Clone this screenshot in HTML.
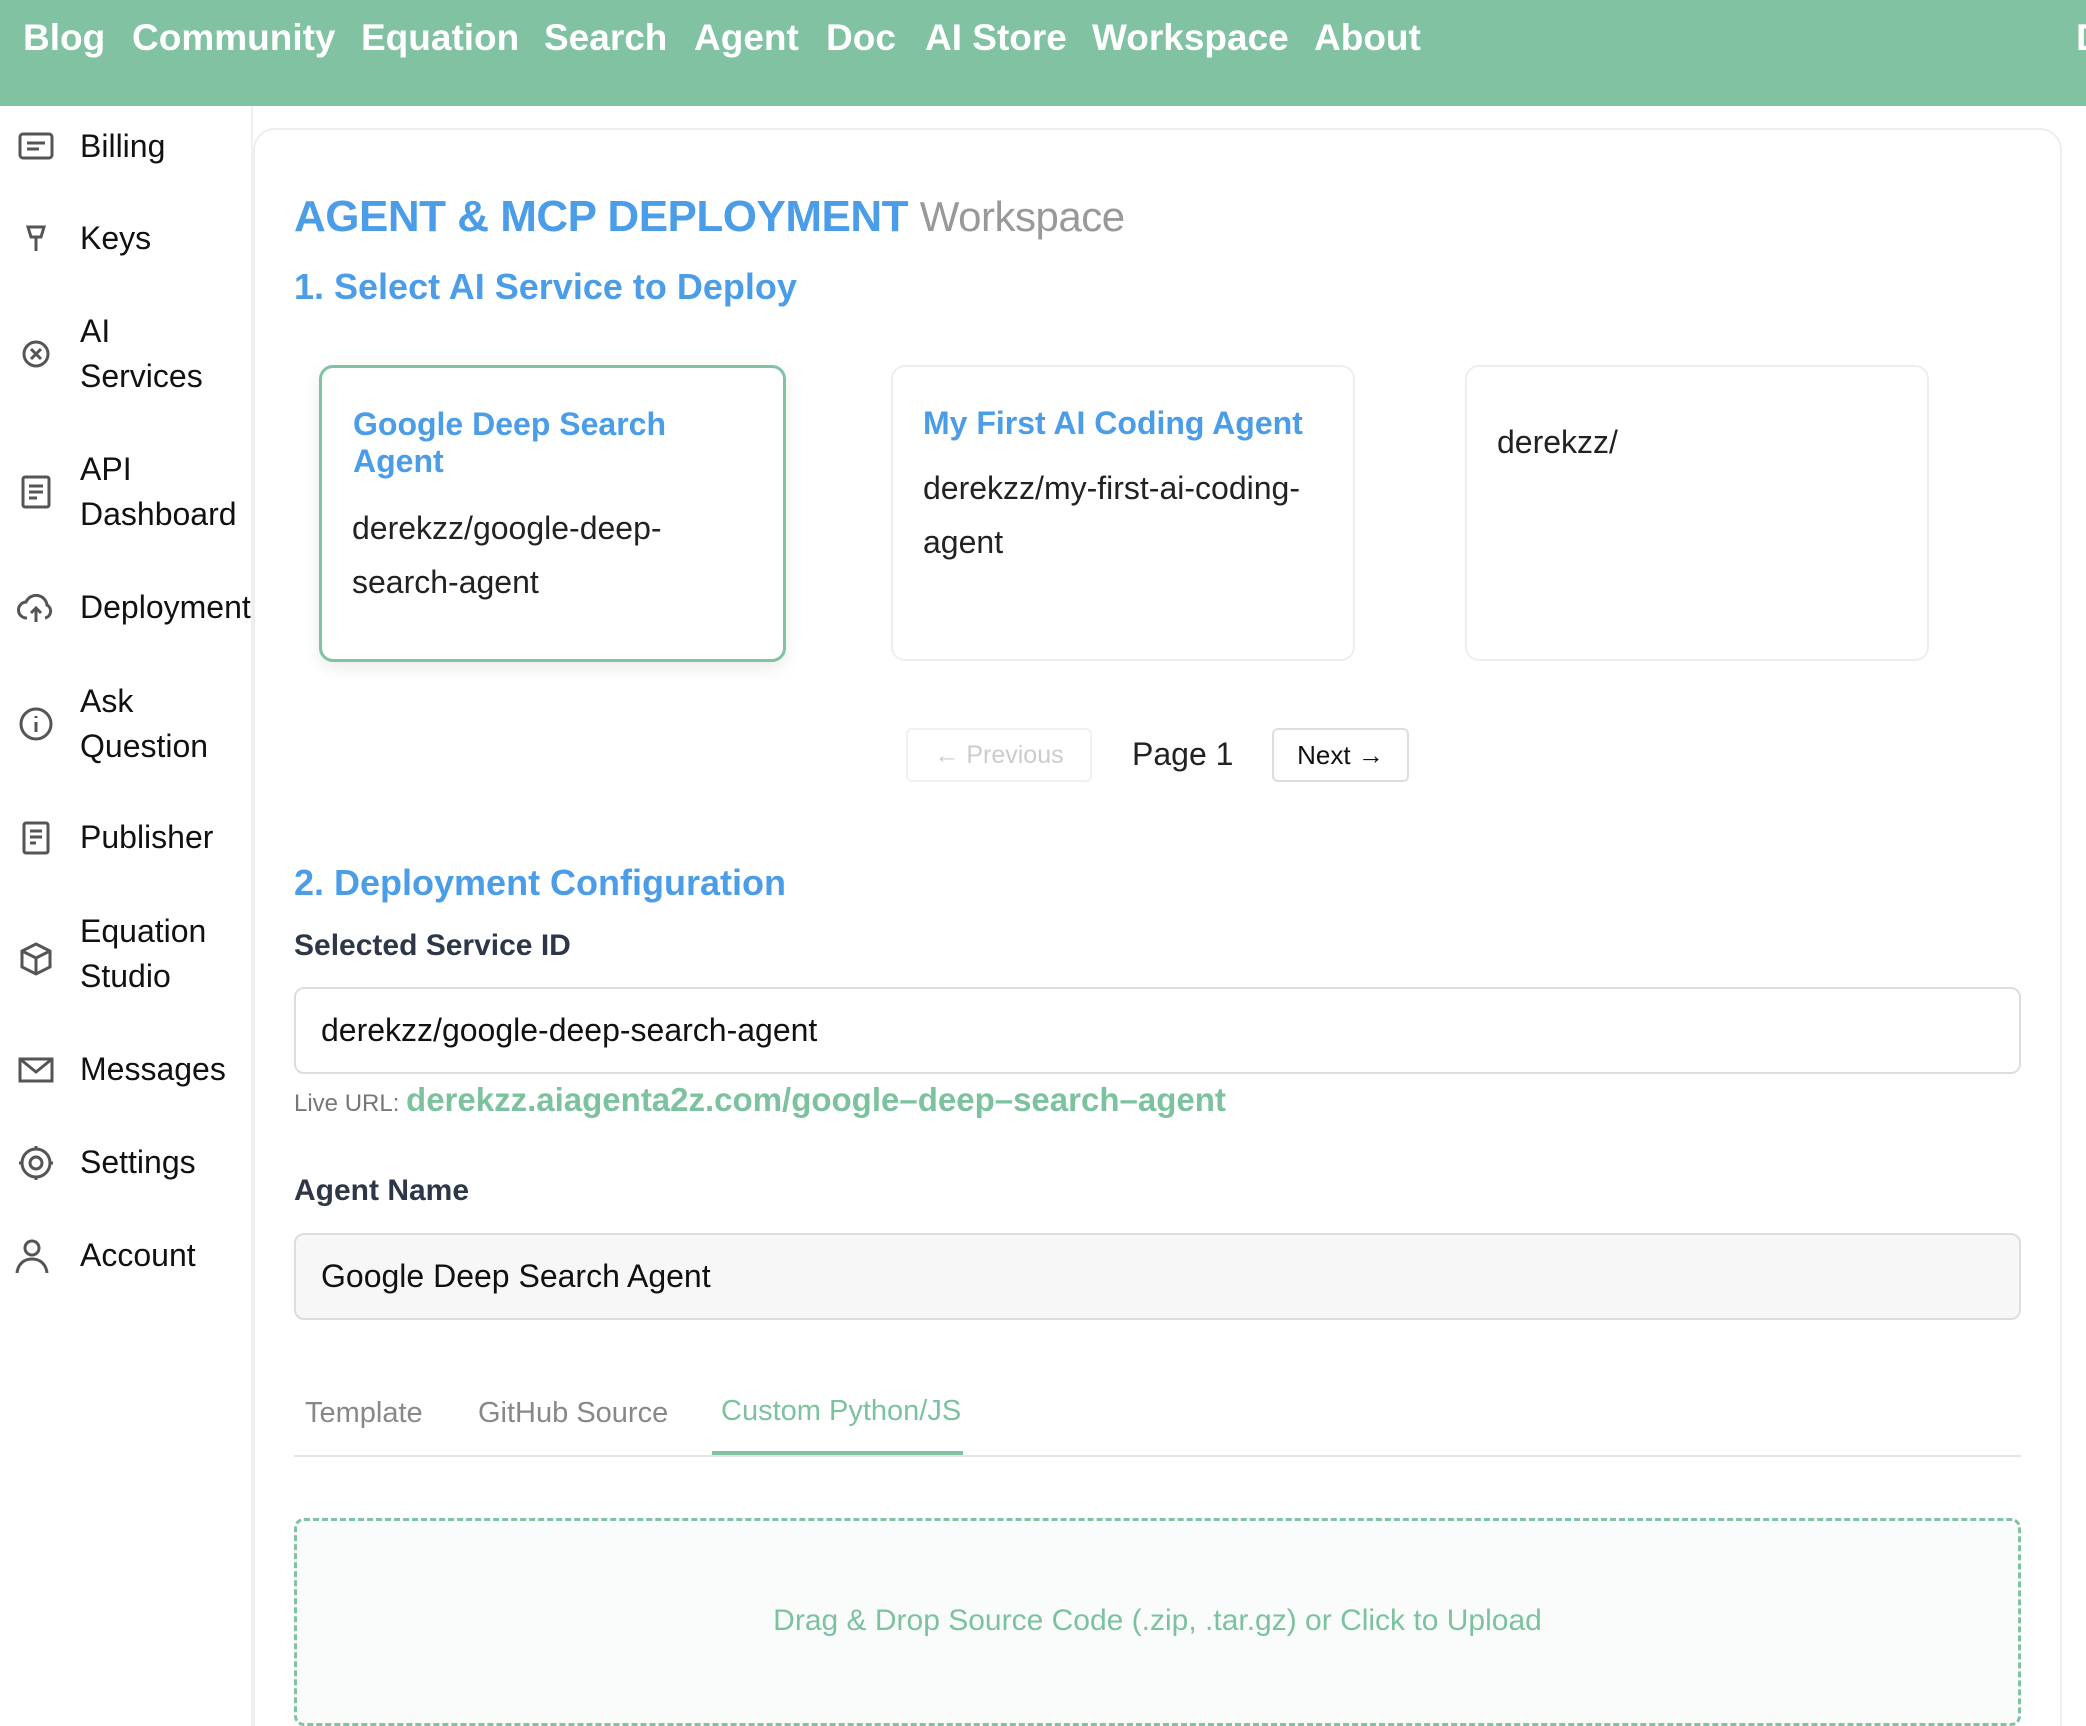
<!DOCTYPE html>
<html style="width:2086px;height:1726px;overflow:hidden"><head><meta charset="utf-8">
<style>
*{box-sizing:border-box;margin:0;padding:0}
body{width:2086px;height:1726px;overflow:hidden;background:#fff;font-family:"Liberation Sans",Arial,sans-serif;position:relative;color:#111}
.hdr{position:absolute;left:0;top:0;width:2086px;height:106px;background:#80c2a2}
.nav{position:absolute;top:16px;color:#fff;font-weight:bold;font-size:37px;line-height:44px}
.side{position:absolute;left:0;top:106px;width:253px;height:1620px;border-right:2px solid #f0f0f0}
.si{position:absolute;left:80px;font-size:32px;line-height:45px;color:#111}
.ic{position:absolute;left:16px;width:40px;height:40px}
.panel{position:absolute;left:253px;top:128px;width:1809px;height:1640px;border:2px solid #eee;border-radius:22px;background:#fff}
.abs{position:absolute}
.blue{color:#4a9de6;font-weight:bold}
.card{position:absolute;top:365px;height:296px;width:464px;border:2px solid #eee;border-radius:14px;background:#fff}
.ct{position:absolute;font-size:32px;line-height:37px;color:#4a9de6;font-weight:bold}
.cb{position:absolute;font-size:32px;line-height:54px;color:#222}
.lbl{position:absolute;left:294px;font-size:30px;font-weight:bold;color:#2d3748}
.inp{position:absolute;left:294px;width:1727px;height:87px;border:2px solid #ddd;border-radius:10px;font-size:32px;line-height:83px;padding-left:25px;color:#111}
</style></head><body>
<div class="hdr">
<div class="nav" style="left:23px">Blog</div>
<div class="nav" style="left:132px">Community</div>
<div class="nav" style="left:361px">Equation</div>
<div class="nav" style="left:544px">Search</div>
<div class="nav" style="left:694px">Agent</div>
<div class="nav" style="left:826px">Doc</div>
<div class="nav" style="left:925px">AI Store</div>
<div class="nav" style="left:1092px">Workspace</div>
<div class="nav" style="left:1314px">About</div>
<div class="nav" style="left:2076px">D</div>
</div>

<div class="side"></div>
<svg class="ic" style="top:126px" viewBox="0 0 40 40" fill="none" stroke="#555" stroke-width="3"><rect x="4" y="8" width="32" height="24" rx="3"/><path d="M11 17h18M11 23h12"/></svg>
<div class="si" style="top:124px">Billing</div>
<svg class="ic" style="top:219px" viewBox="0 0 40 40" fill="none" stroke="#555" stroke-width="3"><path d="M12 8h16l-3 10h-10zM20 18v14"/></svg>
<div class="si" style="top:216px">Keys</div>
<svg class="ic" style="top:334px" viewBox="0 0 40 40" fill="none" stroke="#555" stroke-width="3"><circle cx="20" cy="20" r="12"/><path d="M15 15l10 10M25 15l-10 10"/></svg>
<div class="si" style="top:309px">AI<br>Services</div>
<svg class="ic" style="top:472px" viewBox="0 0 40 40" fill="none" stroke="#555" stroke-width="3"><rect x="7" y="5" width="26" height="30" rx="2"/><path d="M13 14h14M13 20h14M13 26h8"/></svg>
<div class="si" style="top:447px">API<br>Dashboard</div>
<svg class="ic" style="top:588px" viewBox="0 0 40 40" fill="none" stroke="#555" stroke-width="3"><path d="M11 30a8 8 0 0 1-1-16 11 11 0 0 1 21 3 7 7 0 0 1-2 13"/><path d="M20 34V20M15 25l5-5 5 5"/></svg>
<div class="si" style="top:585px">Deployment</div>
<svg class="ic" style="top:704px" viewBox="0 0 40 40" fill="none" stroke="#555" stroke-width="3"><circle cx="20" cy="20" r="15"/><path d="M20 18v10M20 12v2"/></svg>
<div class="si" style="top:679px">Ask<br>Question</div>
<svg class="ic" style="top:818px" viewBox="0 0 40 40" fill="none" stroke="#555" stroke-width="3"><rect x="8" y="5" width="24" height="30" rx="2"/><path d="M14 13h12M14 19h12M14 25h6"/></svg>
<div class="si" style="top:815px">Publisher</div>
<svg class="ic" style="top:939px" viewBox="0 0 40 40" fill="none" stroke="#555" stroke-width="3"><path d="M20 5l14 7v16l-14 7-14-7V12zM6 12l14 7 14-7M20 19v16"/></svg>
<div class="si" style="top:909px">Equation<br>Studio</div>
<svg class="ic" style="top:1050px" viewBox="0 0 40 40" fill="none" stroke="#555" stroke-width="3"><rect x="4" y="9" width="32" height="22"/><path d="M4 9l16 13 16-13"/></svg>
<div class="si" style="top:1047px">Messages</div>
<svg class="ic" style="top:1143px" viewBox="0 0 40 40" fill="none" stroke="#555" stroke-width="3"><circle cx="20" cy="20" r="14"/><circle cx="20" cy="20" r="6"/><path d="M20 3v4M20 33v4M3 20h4M33 20h4"/></svg>
<div class="si" style="top:1140px">Settings</div>
<svg class="ic" style="top:1236px;left:12px" viewBox="0 0 40 40" fill="none" stroke="#555" stroke-width="3"><circle cx="20" cy="12" r="7"/><path d="M5 37c1-9 7-14 15-14s14 5 15 14"/></svg>
<div class="si" style="top:1233px">Account</div>

<div class="panel"></div>
<div class="abs" style="left:294px;top:192px;font-size:44px;line-height:50px;letter-spacing:-0.5px"><span class="blue">AGENT &amp; MCP DEPLOYMENT</span> <span style="color:#999;font-size:42px">Workspace</span></div>
<div class="abs blue" style="left:294px;top:266px;font-size:36px">1. Select AI Service to Deploy</div>

<div class="card" style="left:319px;width:467px;height:297px;border:3px solid #80c2a2;box-shadow:0 6px 18px rgba(0,0,0,.08)"></div>
<div class="ct" style="left:353px;top:406px">Google Deep Search<br>Agent</div>
<div class="cb" style="left:352px;top:501px">derekzz/google-deep-<br>search-agent</div>

<div class="card" style="left:891px"></div>
<div class="ct" style="left:923px;top:405px">My First AI Coding Agent</div>
<div class="cb" style="left:923px;top:461px">derekzz/my-first-ai-coding-<br>agent</div>

<div class="card" style="left:1465px"></div>
<div class="cb" style="left:1497px;top:415px">derekzz/</div>

<div class="abs" style="left:906px;top:728px;width:186px;height:54px;border:2px solid #f0f0f0;border-radius:6px;color:#ccc;font-size:25px;line-height:50px;text-align:center">← Previous</div>
<div class="abs" style="left:1132px;top:736px;font-size:32px;color:#222">Page 1</div>
<div class="abs" style="left:1272px;top:728px;width:137px;height:54px;border:2px solid #ddd;border-radius:6px;color:#111;font-size:26px;line-height:50px;text-align:center">Next →</div>

<div class="abs blue" style="left:294px;top:862px;font-size:36px">2. Deployment Configuration</div>
<div class="lbl" style="top:929px">Selected Service ID</div>
<div class="inp" style="top:987px">derekzz/google-deep-search-agent</div>
<div class="abs" style="left:294px;top:1080px;font-size:24px;color:#777;line-height:40px">Live URL: <span style="color:#7cc29e;font-size:33px;font-weight:bold">derekzz.aiagenta2z.com/google–deep–search–agent</span></div>
<div class="lbl" style="top:1174px">Agent Name</div>
<div class="inp" style="top:1233px;background:#f7f7f7">Google Deep Search Agent</div>

<div class="abs" style="left:305px;top:1397px;font-size:29px;color:#888">Template</div>
<div class="abs" style="left:478px;top:1397px;font-size:29px;color:#888">GitHub Source</div>
<div class="abs" style="left:721px;top:1395px;font-size:29px;color:#7cc29e">Custom Python/JS</div>
<div class="abs" style="left:294px;top:1455px;width:1727px;height:2px;background:#e5e5e5"></div>
<div class="abs" style="left:712px;top:1451px;width:251px;height:4px;background:#80c2a2"></div>

<div class="abs" style="left:294px;top:1518px;width:1727px;height:208px;border:3px dashed #80c2a2;border-radius:10px;background:#fafcfb"></div>
<div class="abs" style="left:294px;top:1604px;width:1727px;text-align:center;font-size:30px;color:#7cc29e">Drag &amp; Drop Source Code (.zip, .tar.gz) or Click to Upload</div>
</body></html>
